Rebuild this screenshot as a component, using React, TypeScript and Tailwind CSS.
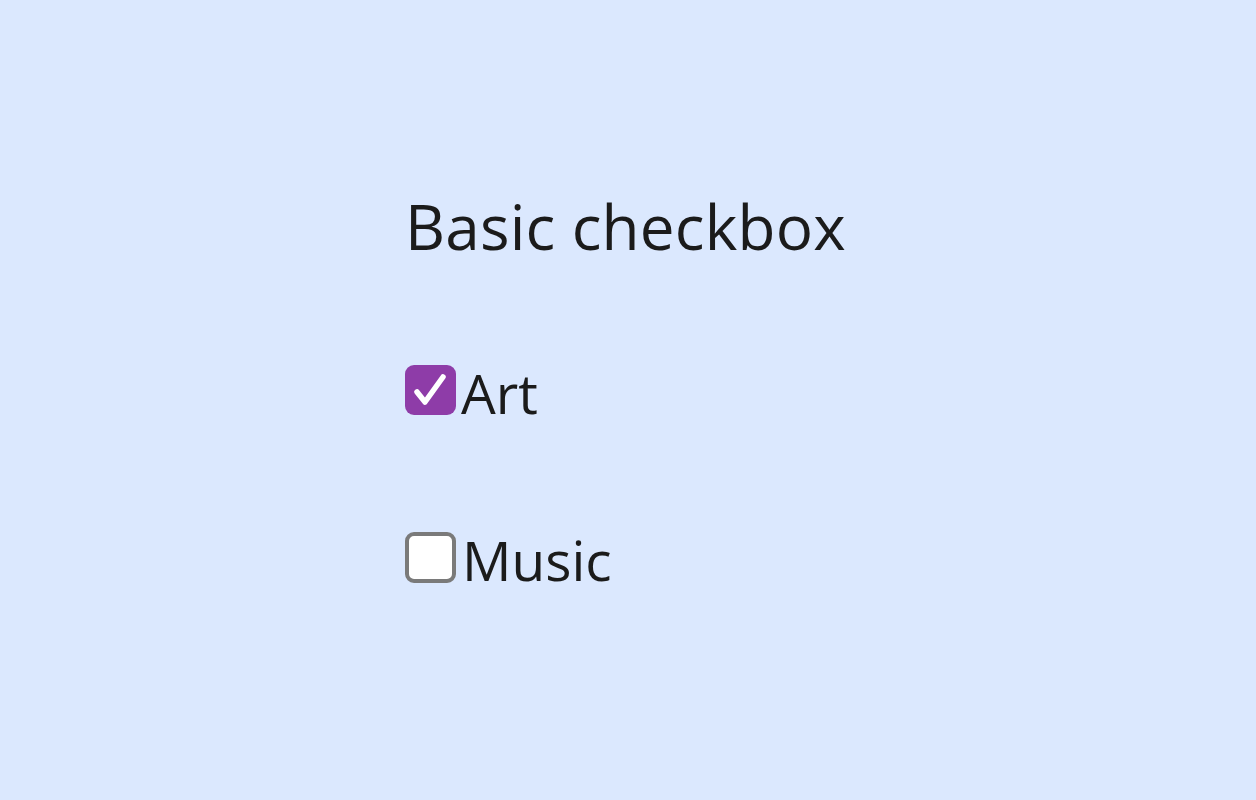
import React from "react";

export default function App() {
  return (
    <div className="w-[1256px] h-[800px] bg-[#dbe8fe] text-[#1b1b1b] font-['Open_Sans',sans-serif] flex flex-col pl-[405px] pt-[186px]">
      <h3 className="text-[62px] leading-[80px] m-0 tracking-[0.2px]">Basic checkbox</h3>
      <div className="flex items-center gap-[5px] mt-[94px] h-[60px]">
        <div className="w-[51px] h-[50px] rounded-[9px] bg-[#8e3ca8]">
          <svg width="51" height="50" viewBox="0 0 51 50" fill="none">
            <path d="M12 27 L20 37 L38 12" stroke="white" strokeWidth="5.5" strokeLinecap="round" strokeLinejoin="round" />
          </svg>
        </div>
        <span className="text-[55px] leading-[60px] pt-[6px]">Art</span>
      </div>
      <div className="flex items-center gap-[6px] mt-[107px] h-[60px]">
        <div className="w-[51px] h-[51px] rounded-[9px] bg-white border-[4px] border-[#7a7a7a]" />
        <span className="text-[55px] leading-[60px] pt-[6px]">Music</span>
      </div>
    </div>
  );
}
